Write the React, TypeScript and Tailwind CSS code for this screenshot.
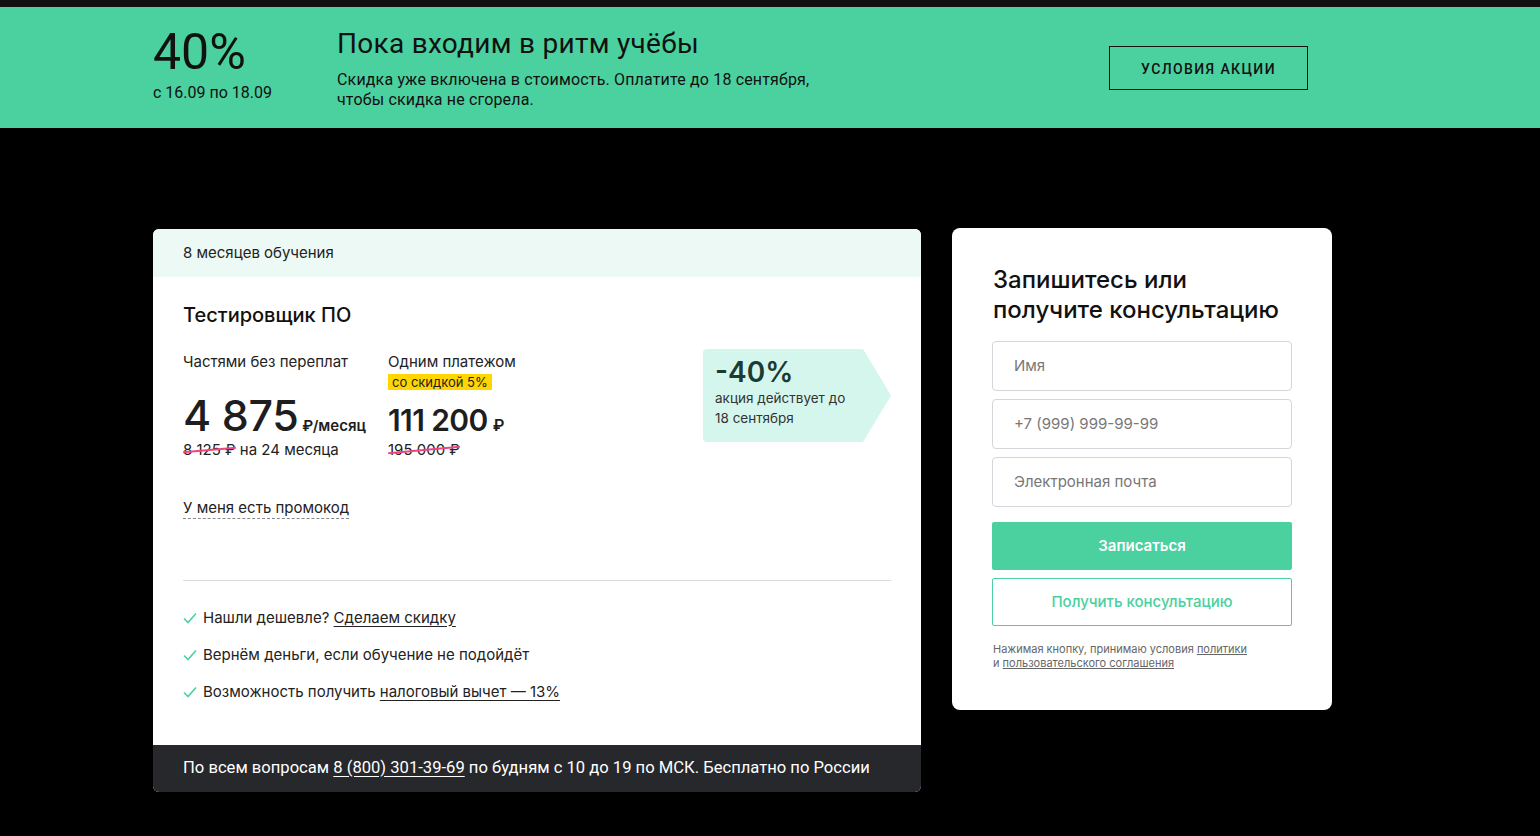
import React from "react";

const Strike = ({ children }: { children: React.ReactNode }) => (
  <span className="relative inline-block">
    {children}
    <span className="absolute left-0 right-0 top-[9px] h-[1.5px] bg-[#f0457e] -rotate-[5deg]" />
  </span>
);

const Check = () => (
  <svg width="14" height="12" viewBox="0 0 14 12" className="mr-[6px] shrink-0">
    <path d="M1 6.5 L5 10.5 L13 1.5" fill="none" stroke="#4ad19e" strokeWidth="1.6" />
  </svg>
);

export default function App() {
  const sans = { fontFamily: "Inter, 'Noto Sans', sans-serif" };
  const narrow = { fontFamily: "Roboto, 'Liberation Sans', sans-serif" };
  return (
    <div className="min-h-screen bg-black" style={sans}>
      <div className="h-[7px] bg-[#111111]" />
      {/* Banner */}
      <div className="h-[121px] bg-[#4bd09f] text-[#111]" style={narrow}>
        <div className="flex items-start pl-[153px] pr-[232px]">
          <div className="w-[184px] pt-[16px]">
            <div className="text-[50px] leading-[58px]">40%</div>
            <div className="text-[16px] leading-[20px] mt-[2px]">с 16.09 по 18.09</div>
          </div>
          <div className="pt-[20px] flex-1">
            <div className="text-[28px] leading-[34px] tracking-[0.01em]">Пока входим в ритм учёбы</div>
            <div className="text-[16px] leading-[20px] mt-[9px] tracking-[0.01em]">
              Скидка уже включена в стоимость. Оплатите до 18 сентября,
              <br />
              чтобы скидка не сгорела.
            </div>
          </div>
          <div className="pt-[39px]">
            <div className="w-[199px] h-[44px] border border-[#111] flex items-center justify-center pt-[3px] text-[14px] tracking-[0.1em] font-medium">
              УСЛОВИЯ АКЦИИ
            </div>
          </div>
        </div>
      </div>

      {/* Main */}
      <div className="flex items-start pl-[153px] pt-[100px] gap-[31px]">
        {/* Left card */}
        <div className="w-[768px] rounded-[6px] overflow-hidden bg-white mt-[1px]">
          <div className="h-[48px] bg-[#edf9f4] flex items-center px-[30px] text-[15px] text-[#222]">
            8 месяцев обучения
          </div>
          <div className="px-[30px] pt-[24px] pb-[43px] text-[#222]">
            <div className="text-[20px] leading-[28px] font-medium text-[#111]">Тестировщик ПО</div>
            <div className="flex justify-between items-start mt-[23px]">
              <div className="grid grid-cols-[205px_auto] items-baseline">
                <div className="text-[15px] leading-[20px] self-start">Частями без переплат</div>
                <div className="self-start">
                  <div className="text-[15px] leading-[20px]">Одним платежом</div>
                  <div className="w-fit bg-[#ffd600] text-[13px] leading-[16px] px-[4px] mt-[2px]">
                    со скидкой 5%
                  </div>
                </div>
                <div className="mt-[4px] text-[#1e1e1e] whitespace-nowrap">
                  <span className="text-[43px] leading-none font-medium tracking-[-0.01em]">4 875</span>
                  <span className="text-[15px] font-semibold ml-[4px]">₽/месяц</span>
                </div>
                <div className="text-[#1e1e1e] whitespace-nowrap">
                  <span className="text-[30px] leading-none font-semibold tracking-[-0.02em]">111 200</span>
                  <span className="text-[16px] font-semibold ml-[5px]">₽</span>
                </div>
                <div className="text-[15px] leading-[20px] mt-[2px]">
                  <Strike>8 125 ₽</Strike> на 24 месяца
                </div>
                <div className="text-[15px] leading-[20px] mt-[2px]">
                  <Strike>195 000 ₽</Strike>
                </div>
              </div>
              <div
                className="w-[188px] h-[93px] bg-[#d5f6ec] rounded-l-[4px] pl-[12px] pt-[7px] -mt-[3px]"
                style={{ clipPath: "polygon(0 0, 160px 0, 188px 50%, 160px 100%, 0 100%)" }}
              >
                <div className="text-[28px] leading-[32px] font-semibold text-[#1c3b31]">-40%</div>
                <div className="text-[13.5px] leading-[20px] text-[#333]">
                  акция действует до
                  <br />
                  18 сентября
                </div>
              </div>
            </div>
            <div className="mt-[35px]">
              <span className="text-[15px] leading-[20px] border-b border-dashed border-[#888] pb-[1px]">
                У меня есть промокод
              </span>
            </div>
            <div className="h-px bg-[#dcdcdc] mt-[61px]" />
            <div className="mt-[27px] flex flex-col gap-[17px] text-[15px] leading-[20px]">
              <div className="flex items-center">
                <Check />
                <span>
                  Нашли дешевле? <span className="underline underline-offset-[3px]">Сделаем скидку</span>
                </span>
              </div>
              <div className="flex items-center">
                <Check />
                <span>Вернём деньги, если обучение не подойдёт</span>
              </div>
              <div className="flex items-center">
                <Check />
                <span>
                  Возможность получить{" "}
                  <span className="underline underline-offset-[3px]">налоговый вычет — 13%</span>
                </span>
              </div>
            </div>
          </div>
          <div className="h-[47px] bg-[#27282c] text-white flex items-center px-[30px] text-[16.6px]" style={narrow}>
            По всем вопросам&nbsp;
            <span className="underline underline-offset-[3px]">8 (800) 301-39-69</span>
            &nbsp;по будням с 10 до 19 по МСК. Бесплатно по России
          </div>
        </div>

        {/* Right card */}
        <div className="w-[380px] bg-white rounded-[8px] px-[40px] pt-[37px] pb-[40px]">
          <div className="text-[24px] leading-[30px] font-medium text-[#111] pl-px">
            Запишитесь или
            <br />
            получите консультацию
          </div>
          <div className="mt-[16px] flex flex-col gap-[8px]">
            {["Имя", "+7 (999) 999-99-99", "Электронная почта"].map((p) => (
              <div
                key={p}
                className="h-[50px] border border-[#d3d6da] rounded-[4px] flex items-center pl-[21px] text-[15px] text-[#777]"
              >
                {p}
              </div>
            ))}
          </div>
          <div className="mt-[15px] h-[48px] bg-[#4bd09f] rounded-[2px] flex items-center justify-center text-white text-[15px] font-semibold">
            Записаться
          </div>
          <div className="mt-[8px] h-[48px] border border-[#4bd09f] rounded-[2px] flex items-center justify-center text-[#4bd09f] text-[15px] font-medium">
            Получить консультацию
          </div>
          <div className="mt-[16px] text-[11px] leading-[14px] text-[#666] pl-px">
            Нажимая кнопку, принимаю условия <span className="underline">политики</span>
            <br />
            и <span className="underline">пользовательского соглашения</span>
          </div>
        </div>
      </div>
    </div>
  );
}
